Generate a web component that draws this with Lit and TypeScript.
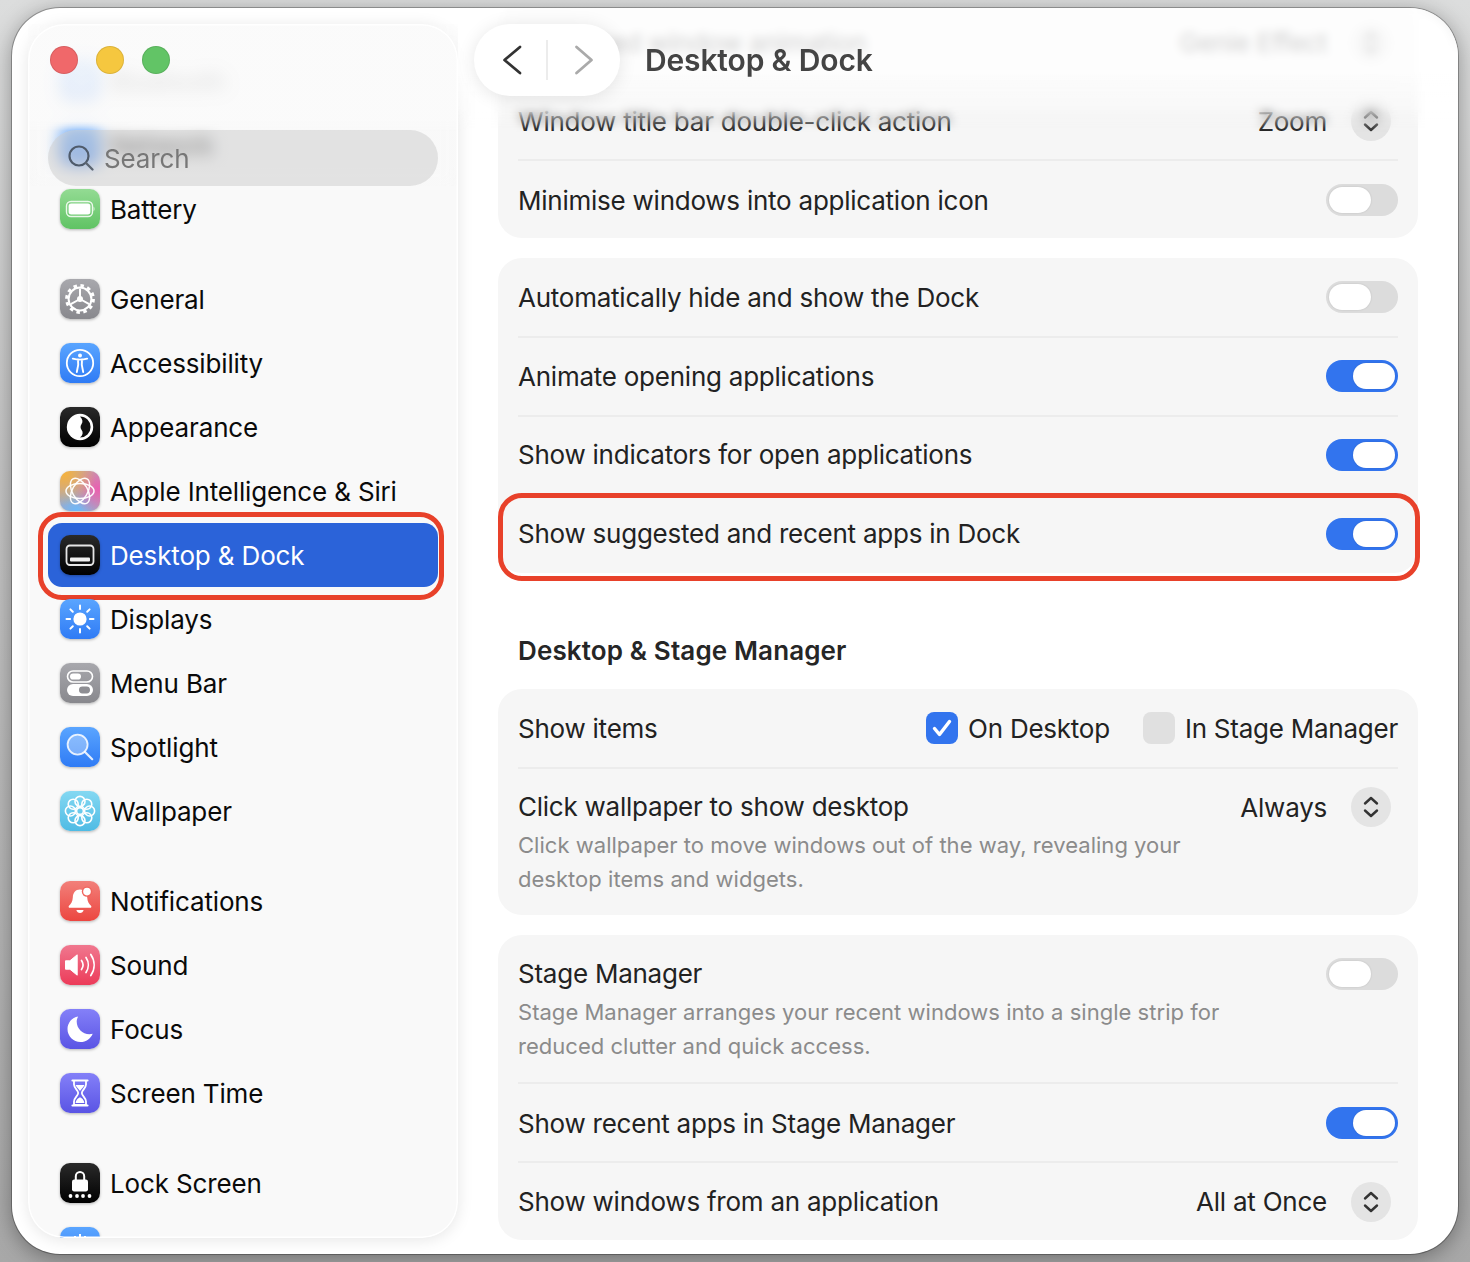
import { LitElement, html, css, svg, nothing } from "lit";
import { customElement } from "lit/decorators.js";

// icon glyphs, all on a 40x40 grid
const glyphs: Record<string, unknown> = {
    network: svg`<circle cx="20" cy="20" r="11" fill="none" stroke="#fff" stroke-width="2"/>`,
    bluetooth: svg`<path d="M14 14l12 12-6 6V8l6 6-12 12" fill="none" stroke="#fff" stroke-width="2"/>`,
    battery: svg`
        <rect x="6.5" y="12.5" width="26" height="15" rx="4.5" fill="none" stroke="#fff" stroke-opacity=".85" stroke-width="1.4"/>
        <rect x="8.6" y="14.6" width="21.8" height="10.8" rx="2.6" fill="#fff"/>
        <path d="M33.6 17.8c1.2.4 1.2 4 0 4.4z" fill="#fff" fill-opacity=".8"/>`,
    general: svg`
        <circle cx="20" cy="20" r="13.4" fill="none" stroke="#fff" stroke-width="3" stroke-dasharray="3.5 3.52"/>
        <circle cx="20" cy="20" r="11.4" fill="none" stroke="#fff" stroke-width="2"/>
        <path d="M20 20V9.5M20 20l-9.2 5.2M20 20l9.2 5.2" stroke="#fff" stroke-width="2" fill="none"/>
        <circle cx="20" cy="20" r="3" fill="#fff"/>`,
    accessibility: svg`
        <circle cx="20" cy="20" r="13.2" fill="none" stroke="#fff" stroke-width="1.8"/>
        <circle cx="20" cy="12.6" r="2" fill="#fff"/>
        <path d="M12.8 15.6c4.8 1.4 9.6 1.4 14.4 0M18 16.4l.2 5.6-1.4 7M22 16.4l-.2 5.6 1.4 7" fill="none" stroke="#fff" stroke-width="1.9" stroke-linecap="round"/>`,
    appearance: svg`
        <circle cx="20" cy="20" r="13.2" fill="#fff"/>
        <path d="M20 9.4a10.6 10.6 0 0 1 0 21.2c3-2.6 3.4-5.2 1.6-7.6-1.4-2-1.4-4 0-6 1.6-2.4 1-5-1.6-7.6z" fill="#111"/>`,
    intelligence: svg`
        <g fill="none" stroke="#fff" stroke-width="1.5" stroke-opacity=".95">
            <ellipse cx="20" cy="20" rx="14" ry="7.6"/>
            <ellipse cx="20" cy="20" rx="14" ry="7.6" transform="rotate(60 20 20)"/>
            <ellipse cx="20" cy="20" rx="14" ry="7.6" transform="rotate(120 20 20)"/>
        </g>`,
    desktop: svg`
        <rect x="6.5" y="10.5" width="27" height="19.5" rx="3.4" fill="none" stroke="#e6e6e6" stroke-width="1.8"/>
        <rect x="10" y="22.5" width="20" height="4" rx="1" fill="#f2f2f2"/>`,
    displays: svg`
        <circle cx="20" cy="20" r="6.6" fill="#fff"/>
        <path d="M20 6.5v3.6M20 29.9v3.6M6.5 20h3.6M29.9 20h3.6M10.4 10.4l2.4 2.4M27.2 27.2l2.4 2.4M10.4 29.6l2.4-2.4M27.2 12.8l2.4-2.4" stroke="#fff" stroke-width="2" stroke-linecap="round" fill="none"/>`,
    menubar: svg`
        <rect x="7.5" y="8" width="25" height="11" rx="5.5" fill="none" stroke="#fff" stroke-width="1.6"/>
        <rect x="10" y="10.4" width="11" height="6.2" rx="3.1" fill="#fff"/>
        <rect x="7" y="21" width="26" height="12" rx="6" fill="#fff"/>
        <rect x="19" y="23.6" width="11" height="6.8" rx="3.4" fill="#8e8e93"/>`,
    spotlight: svg`
        <circle cx="17.6" cy="17.6" r="10" fill="#fff" fill-opacity=".32" stroke="#fff" stroke-opacity=".85" stroke-width="1.8"/>
        <path d="M25 25l7.2 7.2" stroke="#fff" stroke-opacity=".85" stroke-width="2.2" stroke-linecap="round"/>`,
    wallpaper: svg`
        <g fill="none" stroke="#fff" stroke-width="1.6">
            ${[0, 45, 90, 135, 180, 225, 270, 315].map(
                (a) => svg`<circle cx="20" cy="10.4" r="5" transform="rotate(${a} 20 20)"/>`
            )}
            <circle cx="20" cy="20" r="3.4"/>
        </g>`,
    notifications: svg`
        <path d="M20 8.5c-4.6 0-7 3.4-7.2 8-.2 4.2-1.8 6.4-3.8 8.2-.8.8-.4 2.1.8 2.1h20.4c1.2 0 1.6-1.3.8-2.1-2-1.8-3.6-4-3.800-8.200-.2-4.600-2.600-8-7.200-8z" fill="#fff"/>
        <path d="M16.400 29h7.200c-.4 1.900-1.800 3-3.600 3s-3.200-1.100-3.600-3z" fill="#fff"/>
        <circle cx="27" cy="10.600" r="5.200" fill="#f0645c"/>
        <circle cx="27" cy="10.600" r="3.800" fill="#fff"/>`,
    sound: svg`
        <path d="M5.500 15.800h4.400l7.300-6v20.400l-7.300-6H5.500z" fill="#fff" stroke="#fff" stroke-linejoin="round"/>
        <path d="M21.500 15.500c1.900 2.700 1.900 6.300 0 9M26 12.500c3 4.500 3 10.500 0 15M30.800 9.500c4.400 6.500 4.400 14.500 0 21" fill="none" stroke="#fff" stroke-width="1.700" stroke-linecap="round"/>`,
    focus: svg`<path d="M18.200 7.500C11.800 8.600 7.500 13.900 7.500 20c0 7.200 5.800 13 13 13 5.500 0 10.300-3.500 12.200-8.300-1 .3-2.100.5-3.300.5-7 0-12.700-5.700-12.700-12.700 0-1.800.5-3.500 1.500-5z" fill="#fff"/>`,
    screentime: svg`
        <path d="M12.500 7.500h15M12.500 32.500h15" stroke="#fff" stroke-width="2.200" stroke-linecap="round"/>
        <path d="M14 8v3.600c0 3.400 4.200 5.800 4.200 8.400s-4.200 5-4.200 8.400V32h12v-3.600c0-3.400-4.200-5.800-4.200-8.400s4.200-5 4.200-8.400V8" fill="none" stroke="#fff" stroke-width="1.800"/>
        <path d="M15.600 12h8.800c-.6 2.200-3.200 4-4.400 6-1.200-2-3.800-3.800-4.400-6zM20 24.500c1.500 0 4 2.400 4.400 5.500h-8.800c.4-3.100 2.900-5.500 4.400-5.500z" fill="#fff"/>`,
    lock: svg`
        <path d="M15.800 17v-3.800a4.200 4.200 0 0 1 8.400 0V17" fill="none" stroke="#fff" stroke-width="2"/>
        <rect x="12" y="16.500" width="16" height="12" rx="2.200" fill="#fff"/>
        <circle cx="10.500" cy="33" r="1.900" fill="#fff"/><circle cx="17" cy="33" r="1.900" fill="#fff"/>
        <circle cx="23" cy="33" r="1.900" fill="#fff"/><circle cx="29.500" cy="33" r="1.900" fill="#fff"/>`,
    touchid: svg`<path d="M20 7v8M15 9v6M25 9v6" stroke="#fff" stroke-width="2" fill="none"/>`
};

interface SideItem { name: string; icon: string; tone: string; }

const sideGroups: SideItem[][] = [
    [
        { name: "Bluetooth", icon: "bluetooth", tone: "blue" },
        { name: "Network", icon: "network", tone: "blue" },
        { name: "Battery", icon: "battery", tone: "green" }
    ],
    [
        { name: "General", icon: "general", tone: "gray" },
        { name: "Accessibility", icon: "accessibility", tone: "blue" },
        { name: "Appearance", icon: "appearance", tone: "black" },
        { name: "Apple Intelligence & Siri", icon: "intelligence", tone: "rainbow" },
        { name: "Desktop & Dock", icon: "desktop", tone: "black" },
        { name: "Displays", icon: "displays", tone: "blue" },
        { name: "Menu Bar", icon: "menubar", tone: "gray" },
        { name: "Spotlight", icon: "spotlight", tone: "blue" },
        { name: "Wallpaper", icon: "wallpaper", tone: "cyan" }
    ],
    [
        { name: "Notifications", icon: "notifications", tone: "red" },
        { name: "Sound", icon: "sound", tone: "pink" },
        { name: "Focus", icon: "focus", tone: "purple" },
        { name: "Screen Time", icon: "screentime", tone: "purple" }
    ],
    [
        { name: "Lock Screen", icon: "lock", tone: "black" },
        { name: "Touch ID & Password", icon: "touchid", tone: "blue" }
    ]
];

@customElement("app-root")
export class AppRoot extends LitElement
{
    static styles = css`
        :host
        {
            display        : block;
            width          : 1470px;
            height         : 1262px;
            padding        : 8px 12px;
            box-sizing     : border-box;
            overflow       : hidden;
            background     : linear-gradient(#dcdddd, #c4c4c4 40%, #a8a8a8);
            font-family    : Inter, "Liberation Sans", sans-serif;
            font-size      : 26px;
            letter-spacing : -0.24px;
            color          : #222;
        }

        .window
        {
            display       : flex;
            position      : relative;
            height        : 100%;
            padding       : 16px 0 16px 16px;
            box-sizing    : border-box;
            border-radius : 48px;
            background    : #fff;
            box-shadow    : 0 0 0 1px rgba(0, 0, 0, 0.28), 0 4px 22px rgba(0, 0, 0, 0.36);
            overflow      : hidden;
        }

        /* sidebar */
        .sidebar
        {
            position       : relative;
            flex           : none;
            width          : 430px;
            box-sizing     : border-box;
            padding        : 25px 20px 0;
            border-radius  : 36px;
            background     : #f9f9f9;
            box-shadow     : 0 2px 16px rgba(0, 0, 0, 0.1);
            letter-spacing : -0.15px;
            overflow       : hidden;
        }

        .sidebar::after
        {
            content        : "";
            position       : absolute;
            inset          : 0;
            border-radius  : 36px;
            box-shadow     : inset 0 0 0 1.5px #fff;
            pointer-events : none;
        }

        .side-group
        {
            margin-bottom : 26px;
        }

        .side-row
        {
            position      : relative;
            display       : flex;
            align-items   : center;
            gap           : 10px;
            height        : 64px;
            padding-left  : 12px;
            border-radius : 14px;
            color         : #0a0a0a;
        }

        .side-row.selected
        {
            background : #2b63d9;
            color      : #fff;
        }

        .icon
        {
            flex          : none;
            display       : block;
            width         : 40px;
            height        : 40px;
            border-radius : 10px;
            box-shadow    : 0 1px 3px rgba(0, 0, 0, 0.28);
        }

        .icon svg { display: block; width: 40px; height: 40px; }

        .blue    { background: linear-gradient(#5aa5ff, #2f7bf5); }
        .green   { background: linear-gradient(#93db93, #60c364); }
        .gray    { background: linear-gradient(#a8a8ad, #88888d); }
        .black   { background: linear-gradient(#2a2a2a, #000); }
        .cyan    { background: linear-gradient(#84d8f2, #4fbbe4); }
        .red     { background: linear-gradient(#f2807a, #ec4640); }
        .pink    { background: linear-gradient(#f0788f, #ec3b59); }
        .purple  { background: linear-gradient(#8480f8, #5a54e4); }
        .rainbow
        {
            background :
                radial-gradient(circle at 12% 8%, #f5b23e 0, rgba(245, 178, 62, 0) 62%),
                radial-gradient(circle at 95% 45%, #ea5fb0 0, rgba(234, 95, 176, 0) 60%),
                radial-gradient(circle at 40% 100%, #6cb8fa 0, rgba(108, 184, 250, 0) 62%),
                #b9a3b0;
        }

        .side-veil
        {
            position        : absolute;
            inset           : 0 0 auto 0;
            height          : 162px;
            backdrop-filter : blur(8px);
            background      : linear-gradient(rgba(250, 250, 250, 0.88) 60%, rgba(250, 250, 250, 0.1) 66%);
        }

        .lights
        {
            position : absolute;
            top      : 22px;
            left     : 22px;
            display  : flex;
            gap      : 18px;
        }

        .lights span
        {
            width         : 28px;
            height        : 28px;
            box-sizing    : border-box;
            border-radius : 50%;
            border        : 1px solid rgba(0, 0, 0, 0.1);
        }

        .lights .close { background: #f0686a; }
        .lights .min   { background: #f5c73f; }
        .lights .max   { background: #62c466; }

        .search
        {
            position      : absolute;
            top           : 106px;
            left          : 20px;
            right         : 20px;
            height        : 56px;
            display       : flex;
            align-items   : center;
            gap           : 9px;
            padding-left  : 19px;
            box-sizing    : border-box;
            border-radius : 28px;
            background    : rgba(205, 205, 205, 0.52);
            color         : #777;
        }

        .search svg { width: 28px; height: 28px; flex: none; }

        /* annotation rings */
        .ring
        {
            position       : absolute;
            box-sizing     : border-box;
            border         : 5px solid #e8412a;
            border-radius  : 24px;
            pointer-events : none;
        }

        .side-row .ring { inset: -11px -6px -13px -10px; }
        .row .ring      { inset: -1.25px -22px -8px -20px; }

        /* main pane */
        .main
        {
            position   : relative;
            flex       : 1;
            min-width  : 0;
            margin     : -16px 0;
            padding    : 0 40px;
            overflow   : hidden;
        }

        .content
        {
            margin-top : -6.25px;
        }

        .card
        {
            border-radius : 24px;
            background    : #f6f6f6;
            margin-bottom : 20px;
        }

        .row
        {
            position    : relative;
            display     : flex;
            align-items : center;
            height      : 78.75px;
            margin      : 0 20px;
            box-sizing  : border-box;
        }

        .row + .row::before
        {
            content    : "";
            position   : absolute;
            top        : 0;
            left       : 0;
            right      : 0;
            height     : 2px;
            margin-top : -1px;
            background : #ececec;
        }

        /* rows that sit a touch lower between their separators */
        .row.low { padding-top: 3px; }
        .row.low + .row.low::before,
        .row.tall + .row.low::before { margin-top: 0; }

        .row.tall
        {
            align-items : flex-start;
            height      : 147.25px;
            padding     : 23.25px 0 0;
        }

        .row.tall > .value { margin-top: -4px; }

        .grow { flex: 1; min-width: 0; }

        .row.tall .label { line-height: 32px; }

        .desc
        {
            margin-top     : 5px;
            width          : 720px;
            font-size      : 22px;
            line-height    : 34px;
            letter-spacing : 0.03px;
            color          : #8b8b8b;
        }

        .value
        {
            display      : flex;
            align-items  : center;
            gap          : 24px;
            margin-right : 7px;
        }

        .chev
        {
            width         : 40px;
            height        : 40px;
            border-radius : 50%;
            background    : #e4e4e4;
        }

        .chev svg { display: block; width: 40px; height: 40px; }

        .toggle
        {
            position      : relative;
            flex          : none;
            width         : 72px;
            height        : 32px;
            border-radius : 16px;
            background    : #dcdcdc;
        }

        .toggle::after
        {
            content       : "";
            position      : absolute;
            top           : 3px;
            left          : 3px;
            width         : 42px;
            height        : 26px;
            border-radius : 13px;
            background    : #fff;
            box-shadow    : 0 0 2px rgba(0, 0, 0, 0.15);
        }

        .toggle.on { background: #3274ee; }
        .toggle.on::after { left: 27px; }

        .checks
        {
            display     : flex;
            align-items : center;
        }

        .check
        {
            display       : block;
            width         : 32px;
            height        : 32px;
            margin-right  : 10px;
            border-radius : 8px;
            background    : #e0e0e0;
        }

        .check svg { display: block; width: 32px; height: 32px; }
        .check.on { background: #3274ee; }
        .check.off { margin-left: 33px; }

        h2
        {
            margin         : 0;
            padding        : 42px 20px 0;
            height         : 96px;
            box-sizing     : border-box;
            font-size      : 26px;
            font-weight    : 600;
            letter-spacing : 0.13px;
            line-height    : 32px;
            color          : #262626;
        }

        .pane-veil
        {
            position        : absolute;
            inset           : 0 0 auto 0;
            height          : 124px;
            backdrop-filter : blur(5px);
            background      : linear-gradient(rgba(255, 255, 255, 0.78) 50%, rgba(255, 255, 255, 0.28) 80%, rgba(255, 255, 255, 0));
            -webkit-mask-image : linear-gradient(#000 80%, transparent);
            mask-image      : linear-gradient(#000 80%, transparent);
        }

        .nav
        {
            position      : absolute;
            top           : 16px;
            left          : 16px;
            display       : flex;
            align-items   : center;
            width         : 146px;
            height        : 72px;
            border-radius : 36px;
            background    : #fff;
            box-shadow    : 0 2px 18px rgba(0, 0, 0, 0.1);
        }

        .nav svg { width: 73px; height: 44px; flex: none; }
        .nav i { flex: none; width: 2px; height: 40px; margin: 0 -1px; background: #ececec; }

        .title
        {
            position       : absolute;
            top            : 34px;
            left           : 187px;
            font-size      : 30px;
            font-weight    : 600;
            letter-spacing : -0.15px;
            line-height    : 36px;
            color          : #444;
        }
    `;

    icon (item: SideItem)
    {
        return html`<span class="icon ${ item.tone }"><svg viewBox="0 0 40 40">${ glyphs[item.icon] }</svg></span>`;
    }

    toggle (on: boolean)
    {
        return html`<span class="toggle ${ on ? "on" : "" }"></span>`;
    }

    stepper (value: string)
    {
        return html`
            <span class="value">
                <span>${ value }</span>
                <span class="chev">
                    <svg viewBox="0 0 40 40"><path d="M14 16.500l6-5.500 6 5.500M14 23.500l6 5.500 6-5.500" fill="none" stroke="#333" stroke-width="2.400" stroke-linecap="round" stroke-linejoin="round"/></svg>
                </span>
            </span>`;
    }

    sidebar ()
    {
        return html`
            <aside class="sidebar">
                ${ sideGroups.map( ( group ) => html`
                    <div class="side-group">
                        ${ group.map( ( item ) => html`
                            <div class="side-row ${ item.name === "Desktop & Dock" ? "selected" : "" }">
                                ${ this.icon( item ) }
                                <span>${ item.name }</span>
                                ${ item.name === "Desktop & Dock" ? html`<span class="ring"></span>` : nothing }
                            </div>
                        ` ) }
                    </div>
                ` ) }
                <div class="side-veil"></div>
                <div class="lights"><span class="close"></span><span class="min"></span><span class="max"></span></div>
                <div class="search">
                    <svg viewBox="0 0 28 28"><circle cx="12" cy="12" r="9.500" fill="none" stroke="#4f5b6b" stroke-width="2.200"/><path d="M19 19l6.500 6.500" stroke="#5d6672" stroke-width="2.400" stroke-linecap="round"/></svg>
                    <span>Search</span>
                </div>
            </aside>`;
    }

    render ()
    {
        return html`
            <div class="window">
                ${ this.sidebar() }
                <section class="main">
                    <div class="content">
                        <div class="card">
                            <div class="row low"><span class="grow">Minimised window animation</span>${ this.stepper( "Genie Effect" ) }</div>
                            <div class="row low"><span class="grow">Window title bar double-click action</span>${ this.stepper( "Zoom" ) }</div>
                            <div class="row low"><span class="grow">Minimise windows into application icon</span>${ this.toggle( false ) }</div>
                        </div>
                        <div class="card">
                            <div class="row"><span class="grow">Automatically hide and show the Dock</span>${ this.toggle( false ) }</div>
                            <div class="row"><span class="grow">Animate opening applications</span>${ this.toggle( true ) }</div>
                            <div class="row"><span class="grow">Show indicators for open applications</span>${ this.toggle( true ) }</div>
                            <div class="row"><span class="grow">Show suggested and recent apps in Dock</span>${ this.toggle( true ) }<span class="ring"></span></div>
                        </div>
                        <h2>Desktop &amp; Stage Manager</h2>
                        <div class="card">
                            <div class="row">
                                <span class="grow">Show items</span>
                                <span class="checks">
                                    <span class="check on"><svg viewBox="0 0 32 32"><path d="M8.500 16.500l5 6 10-13" fill="none" stroke="#fff" stroke-width="3.400" stroke-linecap="round" stroke-linejoin="round"/></svg></span>
                                    <span>On Desktop</span>
                                    <span class="check off"></span>
                                    <span>In Stage Manager</span>
                                </span>
                            </div>
                            <div class="row tall">
                                <div class="grow">
                                    <div class="label">Click wallpaper to show desktop</div>
                                    <div class="desc">Click wallpaper to move windows out of the way, revealing your desktop items and widgets.</div>
                                </div>
                                ${ this.stepper( "Always" ) }
                            </div>
                        </div>
                        <div class="card">
                            <div class="row tall">
                                <div class="grow">
                                    <div class="label">Stage Manager</div>
                                    <div class="desc">Stage Manager arranges your recent windows into a single strip for reduced clutter and quick access.</div>
                                </div>
                                ${ this.toggle( false ) }
                            </div>
                            <div class="row low"><span class="grow">Show recent apps in Stage Manager</span>${ this.toggle( true ) }</div>
                            <div class="row low"><span class="grow">Show windows from an application</span>${ this.stepper( "All at Once" ) }</div>
                        </div>
                    </div>
                    <div class="pane-veil"></div>
                    <div class="nav">
                        <svg viewBox="0 0 73 44"><path d="M46 9L30.500 22 46 35" fill="none" stroke="#333" stroke-width="2.800" stroke-linecap="round" stroke-linejoin="round"/></svg>
                        <i></i>
                        <svg viewBox="0 0 73 44"><path d="M29.500 9l15 13-15 13" fill="none" stroke="#aaa" stroke-width="2.800" stroke-linecap="round" stroke-linejoin="round"/></svg>
                    </div>
                    <div class="title">Desktop &amp; Dock</div>
                </section>
            </div>`;
    }
}
